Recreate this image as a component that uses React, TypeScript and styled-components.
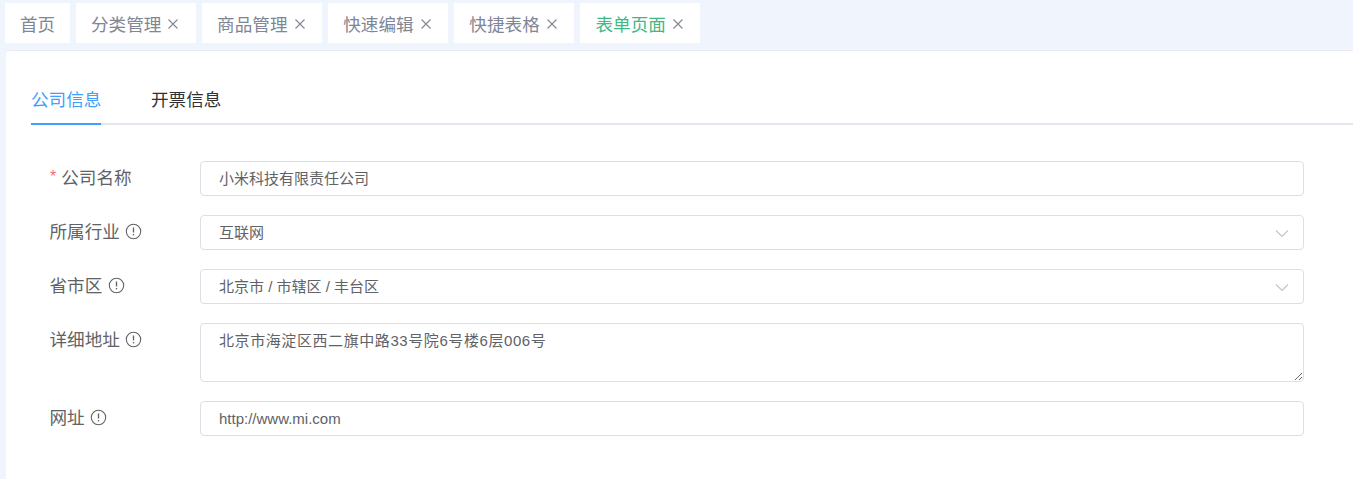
import React from "react";
import styled, { createGlobalStyle } from "styled-components";

const FONT = `"Liberation Sans", "Noto Sans CJK SC", sans-serif`;

const Global = createGlobalStyle`
  html, body { margin: 0; padding: 0; height: 100%; overflow: hidden; background: #f0f4fc; }
  * { box-sizing: border-box; }
  body { font-family: ${FONT}; }
`;

const Page = styled.div`
  width: 1353px;
  height: 479px;
  overflow: hidden;
  background: #f0f4fc;
  padding: 3px 0 0 5px;
`;

const TagBar = styled.nav`
  display: flex;
  height: 40px;
  gap: 6.35px;
`;

const Tag = styled.div<{ $active?: boolean; $closable?: boolean }>`
  display: flex;
  align-items: center;
  height: 40px;
  padding: ${(p) => (p.$closable ? "0 16.4px 0 15px" : "0 14.45px 0 15px")};
  background: #fff;
  font-size: 17.6px;
  color: ${(p) => (p.$active ? "#42b983" : "#808695")};
  white-space: nowrap;
`;

const CloseIcon = styled.svg`
  width: 12px;
  height: 12px;
  margin-left: 6px;
  margin-top: 1px;
  color: #808695;
`;

const Card = styled.main`
  margin: 7px 0 0 1px;
  height: 430px;
  background: #fff;
  border-top: 1px solid #e8ebf2;
  border-radius: 4px 0 0 0;
  padding: 25px 0 0 25px;
`;

const Tabs = styled.div`
  display: flex;
  gap: 49.6px;
  height: 49px;
  border-bottom: 2px solid #e4e7ed;
`;

const TabItem = styled.div<{ $active?: boolean }>`
  height: 49px;
  line-height: 49px;
  font-size: 17.6px;
  color: ${(p) => (p.$active ? "#409eff" : "#303133")};
  border-bottom: 2px solid ${(p) => (p.$active ? "#409eff" : "transparent")};
`;

const Form = styled.form`
  display: flex;
  flex-direction: column;
  gap: 19px;
  margin-top: 36px;
  padding-left: 18.5px;
`;

const Row = styled.div`
  display: flex;
  align-items: flex-start;
`;

const Label = styled.label`
  display: flex;
  align-items: center;
  width: 150.5px;
  height: 34px;
  font-size: 17.6px;
  color: #606266;
  flex: none;
  padding-bottom: 3px;
`;

const Star = styled.span`
  color: #f56c6c;
  font-size: 16px;
  margin-right: 5px;
  margin-left: 0.5px;
`;

const Info = styled.svg`
  width: 17px;
  height: 17px;
  margin-left: 5.5px;
  margin-top: 1px;
  color: #606266;
`;

const Field = styled.div`
  position: relative;
  width: 1104px;
`;

const TextInput = styled.input<{ $latin?: boolean }>`
  display: block;
  width: 100%;
  height: 35px;
  padding: 0 19px ${(p) => (p.$latin ? "0" : "2px")} 18px;
  border: 1px solid #dcdfe6;
  border-radius: 4px;
  outline: none;
  background: #fff;
  color: #606266;
  font-family: ${FONT};
  font-size: 15px;
`;

const TextArea = styled.textarea`
  display: block;
  width: 100%;
  height: 59px;
  padding: 6px 19px 6px 18px;
  border: 1px solid #dcdfe6;
  border-radius: 4px;
  outline: none;
  background: #fff;
  color: #606266;
  font-family: ${FONT};
  font-size: 15px;
  letter-spacing: 0.58px;
  line-height: 22px;
  resize: vertical;
`;

const Chevron = styled.svg`
  position: absolute;
  right: 15px;
  top: 11px;
  width: 14px;
  height: 14px;
  color: #c0c4cc;
  pointer-events: none;
`;

const InfoIcon = () => (
  <Info viewBox="0 0 17 17" fill="none" stroke="currentColor">
    <circle cx="8.5" cy="8.5" r="7.2" strokeWidth="1.1" />
    <path d="M8.5 4.5v5" strokeWidth="1.3" />
    <path d="M8.5 11v1.4" strokeWidth="1.3" />
  </Info>
);

const ChevronIcon = () => (
  <Chevron viewBox="0 0 14 14" fill="none" stroke="currentColor" strokeWidth="1.1">
    <path d="M1 4.5l6 6 6-6" />
  </Chevron>
);

const tags = [
  { name: "首页" },
  { name: "分类管理", close: true },
  { name: "商品管理", close: true },
  { name: "快速编辑", close: true },
  { name: "快捷表格", close: true },
  { name: "表单页面", close: true, active: true },
];

export default function App() {
  return (
    <Page>
      <Global />
      <TagBar>
        {tags.map((t) => (
          <Tag key={t.name} $active={t.active} $closable={t.close}>
            {t.name}
            {t.close && (
              <CloseIcon viewBox="0 0 12 12" fill="none" stroke="currentColor" strokeWidth="1.1">
                <path d="M1.5 1.5l9 9M10.5 1.5l-9 9" />
              </CloseIcon>
            )}
          </Tag>
        ))}
      </TagBar>
      <Card>
        <Tabs>
          <TabItem $active>公司信息</TabItem>
          <TabItem>开票信息</TabItem>
        </Tabs>
        <Form>
          <Row>
            <Label><Star>*</Star>公司名称</Label>
            <Field><TextInput readOnly value="小米科技有限责任公司" /></Field>
          </Row>
          <Row>
            <Label>所属行业<InfoIcon /></Label>
            <Field><TextInput readOnly value="互联网" /><ChevronIcon /></Field>
          </Row>
          <Row>
            <Label>省市区<InfoIcon /></Label>
            <Field><TextInput readOnly value="北京市 / 市辖区 / 丰台区" /><ChevronIcon /></Field>
          </Row>
          <Row>
            <Label>详细地址<InfoIcon /></Label>
            <Field><TextArea readOnly value="北京市海淀区西二旗中路33号院6号楼6层006号" /></Field>
          </Row>
          <Row>
            <Label>网址<InfoIcon /></Label>
            <Field><TextInput $latin readOnly value="http://www.mi.com" /></Field>
          </Row>
        </Form>
      </Card>
    </Page>
  );
}
